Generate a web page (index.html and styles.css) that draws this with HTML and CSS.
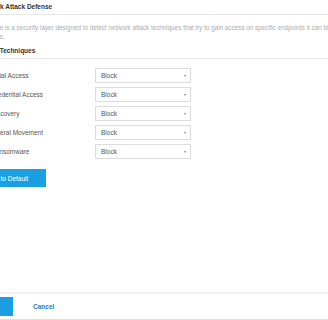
FILE: index.html
```html
<!DOCTYPE html>
<html lang="en">
<head>
  <meta charset="UTF-8" />
  <title>Network Attack Defense</title>
  <link rel="stylesheet" href="styles.css">
</head>
<body>
  <div class="page">
    <div class="content">
      <h1 class="title">Network Attack Defense</h1>
      <p class="desc">This feature is a security layer designed to detect network attack techniques that try to gain access on specific endpoints it can block<br>incidents.</p>

      <h2 class="heading">Attack Techniques</h2>
      <div class="rows">
        <div class="row"><span class="label">Initial Access</span><div class="select"><span>Block</span><i class="caret"></i></div></div>
        <div class="row"><span class="label">Credential Access</span><div class="select"><span>Block</span><i class="caret"></i></div></div>
        <div class="row"><span class="label">Discovery</span><div class="select"><span>Block</span><i class="caret"></i></div></div>
        <div class="row"><span class="label">Lateral Movement</span><div class="select"><span>Block</span><i class="caret"></i></div></div>
        <div class="row"><span class="label">Ransomware</span><div class="select"><span>Block</span><i class="caret"></i></div></div>
      </div>

      <button class="btn reset">Reset to Default</button>
    </div>

    <div class="footer">
      <button class="btn save">Save</button>
      <a class="cancel" href="#">Cancel</a>
    </div>
  </div>
</body>
</html>
```

FILE: styles.css
```css
body {
  margin: 0;
  height: 320px;
  overflow: hidden;
  background: #fff;
  font-family: "Liberation Sans", Arial, sans-serif;
  font-size: 6.5px;
  color: #555;
}

.page {
  margin-left: -22px;
  height: 320px;
  display: flex;
  flex-direction: column;
}

.content {
  flex: 1;
}

.title {
  margin: 0;
  height: 14px;
  line-height: 14px;
  font-size: 6.5px;
  font-weight: bold;
  color: #333;
  border-bottom: 1px solid #e8e8e8;
  white-space: nowrap;
}

.desc {
  margin: 8px 0 0;
  line-height: 9px;
  font-size: 6.3px;
  color: #acacac;
  text-indent: -8px;
  white-space: nowrap;
}

.heading {
  margin: 3px 0 0;
  height: 14px;
  line-height: 14px;
  font-size: 6.5px;
  font-weight: bold;
  color: #333;
  border-bottom: 1px solid #e8e8e8;
}

.rows {
  margin-top: 9px;
  display: flex;
  flex-direction: column;
  gap: 4px;
}

.row {
  display: grid;
  grid-template-columns: 117px 96px;
  align-items: center;
}

.label {
  padding-left: 13px;
  color: #555;
}

.select {
  height: 15px;
  box-sizing: border-box;
  border: 1px solid #dcdcdc;
  display: flex;
  align-items: center;
  justify-content: space-between;
  padding: 0 4px 0 5px;
  color: #555;
}

.caret {
  width: 0;
  height: 0;
  border-left: 1.5px solid transparent;
  border-right: 1.5px solid transparent;
  border-top: 2px solid #888;
}

.btn {
  border: none;
  background: #1aa0e2;
  color: #fff;
  font-family: inherit;
  font-size: 6.5px;
  cursor: pointer;
}

.reset {
  display: block;
  margin-top: 10px;
  height: 18px;
  width: 82px;
  margin-left: -14px;
  padding: 0;
}

.footer {
  border-top: 2px solid #f3f3f3;
  border-bottom: 1px solid #dedede;
  height: 25px;
  display: flex;
  align-items: center;
}

.save {
  width: 50px;
  height: 19px;
  margin-left: -15px;
}

.cancel {
  margin-left: 20px;
  color: #1f7fc4;
  font-weight: bold;
  text-decoration: none;
}
```
